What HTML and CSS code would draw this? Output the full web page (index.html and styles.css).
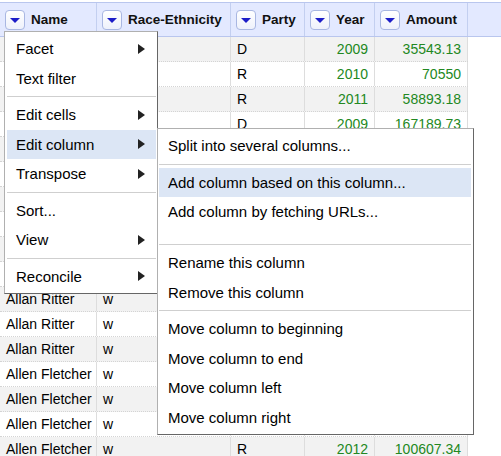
FILE: index.html
```html
<!DOCTYPE html>
<html>
<head>
<meta charset="utf-8">
<link rel="stylesheet" href="styles.css">
</head>
<body>
<div class="page">
  <div class="thead">
    <div class="th"><span class="hbtn"><span class="tri"></span></span><span>Name</span></div>
    <div class="th"><span class="hbtn"><span class="tri"></span></span><span>Race-Ethnicity</span></div>
    <div class="th"><span class="hbtn"><span class="tri"></span></span><span>Party</span></div>
    <div class="th"><span class="hbtn"><span class="tri"></span></span><span>Year</span></div>
    <div class="th"><span class="hbtn"><span class="tri"></span></span><span>Amount</span></div>
    <div class="th filler"></div>
  </div>
  <div class="tbody">
    <div class="tr odd"><div class="td">Aaron Peña</div><div class="td">h</div><div class="td">D</div><div class="td num">2009</div><div class="td num">35543.13</div></div>
    <div class="tr"><div class="td">Al Jackson</div><div class="td">w</div><div class="td">R</div><div class="td num">2010</div><div class="td num">70550</div></div>
    <div class="tr odd"><div class="td">Al Jackson</div><div class="td">w</div><div class="td">R</div><div class="td num">2011</div><div class="td num">58893.18</div></div>
    <div class="tr"><div class="td">Abel Herrero</div><div class="td">h</div><div class="td">D</div><div class="td num">2009</div><div class="td num">167189.73</div></div>
    <div class="tr odd"><div class="td">Abel Herrero</div><div class="td">h</div><div class="td">D</div><div class="td num">2010</div><div class="td num">48210.55</div></div>
    <div class="tr"><div class="td">Abel Herrero</div><div class="td">h</div><div class="td">D</div><div class="td num">2011</div><div class="td num">39876.2</div></div>
    <div class="tr odd"><div class="td">Al Edwards</div><div class="td">b</div><div class="td">D</div><div class="td num">2009</div><div class="td num">21450</div></div>
    <div class="tr"><div class="td">Al Edwards</div><div class="td">b</div><div class="td">D</div><div class="td num">2010</div><div class="td num">18300.5</div></div>
    <div class="tr odd"><div class="td">Allan Ritter</div><div class="td">w</div><div class="td">D</div><div class="td num">2009</div><div class="td num">92310.44</div></div>
    <div class="tr"><div class="td">Allan Ritter</div><div class="td">w</div><div class="td">R</div><div class="td num">2010</div><div class="td num">110250</div></div>
    <div class="tr odd"><div class="td">Allan Ritter</div><div class="td">w</div><div class="td">R</div><div class="td num">2011</div><div class="td num">87540.12</div></div>
    <div class="tr"><div class="td">Allan Ritter</div><div class="td">w</div><div class="td">R</div><div class="td num">2012</div><div class="td num">65400</div></div>
    <div class="tr odd"><div class="td">Allan Ritter</div><div class="td">w</div><div class="td">R</div><div class="td num">2012</div><div class="td num">12000</div></div>
    <div class="tr"><div class="td">Allen Fletcher</div><div class="td">w</div><div class="td">R</div><div class="td num">2009</div><div class="td num">45120.9</div></div>
    <div class="tr odd"><div class="td">Allen Fletcher</div><div class="td">w</div><div class="td">R</div><div class="td num">2010</div><div class="td num">76002.31</div></div>
    <div class="tr"><div class="td">Allen Fletcher</div><div class="td">w</div><div class="td">R</div><div class="td num">2011</div><div class="td num">54321</div></div>
    <div class="tr odd"><div class="td">Allen Fletcher</div><div class="td">w</div><div class="td">R</div><div class="td num">2012</div><div class="td num">100607.34</div></div>
  </div>

  <div class="menu main-menu">
    <div class="item"><span>Facet</span><span class="arrow"></span></div>
    <div class="item"><span>Text filter</span></div>
    <div class="sep"></div>
    <div class="item"><span>Edit cells</span><span class="arrow"></span></div>
    <div class="item active"><span>Edit column</span><span class="arrow"></span></div>
    <div class="item"><span>Transpose</span><span class="arrow"></span></div>
    <div class="sep"></div>
    <div class="item"><span>Sort...</span></div>
    <div class="item"><span>View</span><span class="arrow"></span></div>
    <div class="sep"></div>
    <div class="item"><span>Reconcile</span><span class="arrow"></span></div>
  </div>

  <div class="menu sub-menu">
    <div class="item"><span>Split into several columns...</span></div>
    <div class="sep"></div>
    <div class="item active"><span>Add column based on this column...</span></div>
    <div class="item"><span>Add column by fetching URLs...</span></div>
    <div class="spacer"></div>
    <div class="sep"></div>
    <div class="item"><span>Rename this column</span></div>
    <div class="item"><span>Remove this column</span></div>
    <div class="sep"></div>
    <div class="item"><span>Move column to beginning</span></div>
    <div class="item"><span>Move column to end</span></div>
    <div class="item"><span>Move column left</span></div>
    <div class="item"><span>Move column right</span></div>
  </div>
</div>
</body>
</html>
```
FILE: styles.css
```css
html, body {
  margin: 0;
  padding: 0;
  background: #fff;
}
body {
  font-family: "Liberation Sans", Arial, sans-serif;
  color: #000;
  width: 501px;
  height: 456px;
  overflow: hidden;
}
.page {
  position: relative;
  padding-top: 2px;
}
.thead {
  display: grid;
  grid-template-columns: 97px 134px 74px 70px 93px 1fr;
  background: #e3e9ff;
  border-top: 1px solid #b9c6ee;
  border-bottom: 1px solid #b9c6ee;
  height: 35px;
  box-sizing: border-box;
}
.th {
  display: flex;
  align-items: center;
  gap: 6px;
  padding-left: 5px;
  border-right: 1px solid #c3cff0;
  font-weight: bold;
  font-size: 13.5px;
  color: #111;
  white-space: nowrap;
  overflow: hidden;
}
.th.filler {
  border-right: none;
}
.hbtn {
  width: 20px;
  height: 20px;
  box-sizing: border-box;
  border: 1px solid #a9b7e2;
  border-radius: 4px;
  background: linear-gradient(#ffffff, #eef1fb);
  display: flex;
  align-items: center;
  justify-content: center;
  flex: none;
}
.tri {
  width: 0;
  height: 0;
  border-left: 5px solid transparent;
  border-right: 5px solid transparent;
  border-top: 5px solid #1d1dc8;
  margin-top: 1px;
}
.tbody {
  width: 468px;
}
.tr {
  display: grid;
  grid-template-columns: 97px 134px 74px 70px 93px;
  height: 25px;
  box-sizing: border-box;
  border-bottom: 1px dotted #d4d4d4;
  background: #fff;
}
.tr.odd {
  background: #f2f2f2;
}
.td {
  border-right: 1px solid #ddd;
  padding: 0 6px;
  font-size: 14px;
  line-height: 24px;
  white-space: nowrap;
  overflow: hidden;
}
.td.num {
  text-align: right;
  color: #228822;
}
.menu {
  position: absolute;
  background: #fff;
  box-sizing: border-box;
  border: 1px solid #b0b0b0;
  border-right-color: #666;
  border-bottom-color: #666;
  font-size: 15px;
}
.main-menu {
  left: 4px;
  top: 31px;
  width: 154px;
  padding: 2px 1px 2px 2px;
}
.sub-menu {
  left: 157px;
  top: 128px;
  width: 317px;
  padding: 2px 2px 2px 1px;
}
.item {
  display: flex;
  align-items: center;
  justify-content: space-between;
  height: 29.5px;
  padding: 0 11px 0 9px;
  box-sizing: border-box;
  white-space: nowrap;
}
.item.active {
  background: #dce6f5;
}
.arrow {
  width: 0;
  height: 0;
  border-left: 7px solid #222;
  border-top: 5px solid transparent;
  border-bottom: 5px solid transparent;
}
.sep {
  height: 1px;
  background: #cfcfcf;
  margin: 3px 0;
}
.spacer {
  height: 14.5px;
}
```
